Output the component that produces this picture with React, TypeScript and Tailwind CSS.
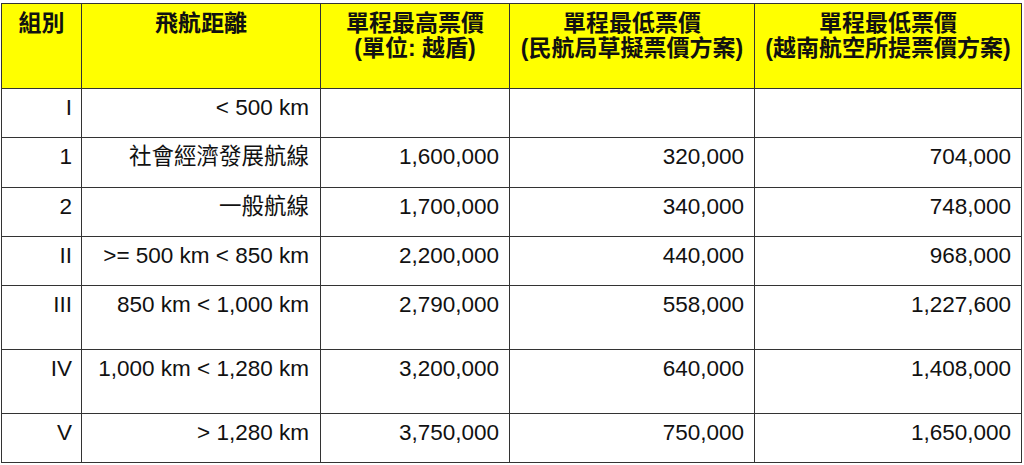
import React from "react";

const rows: { h: string; c: string[] }[] = [
  { h: "h-[49px]", c: ["I", "< 500 km", "", "", ""] },
  { h: "h-[50px]", c: ["1", "社會經濟發展航線", "1,600,000", "320,000", "704,000"] },
  { h: "h-[49px]", c: ["2", "一般航線", "1,700,000", "340,000", "748,000"] },
  { h: "h-[49px]", c: ["II", ">= 500 km < 850 km", "2,200,000", "440,000", "968,000"] },
  { h: "h-[64px]", c: ["III", "850 km < 1,000 km", "2,790,000", "558,000", "1,227,600"] },
  { h: "h-[64px]", c: ["IV", "1,000 km < 1,280 km", "3,200,000", "640,000", "1,408,000"] },
  { h: "h-[49px]", c: ["V", "> 1,280 km", "3,750,000", "750,000", "1,650,000"] },
];

const headers: string[][] = [
  ["組別"],
  ["飛航距離"],
  ["單程最高票價", "(單位: 越盾)"],
  ["單程最低票價", "(民航局草擬票價方案)"],
  ["單程最低票價", "(越南航空所提票價方案)"],
];

export default function App() {
  return (
    <div
      className="w-[1024px] h-[465px] bg-white overflow-hidden pt-[3px] pl-[1px] text-[#111]"
      style={{ fontFamily: '"Liberation Sans", "Noto Sans CJK TC", Arial, sans-serif' }}
    >
      <div className="grid grid-cols-[80px_239px_189px_245px_267px] border-l border-t border-[#333] w-fit">
        {headers.map((lines, i) => (
          <div
            key={"h" + i}
            className="h-[85px] bg-[#ffff00] border-r border-b border-[#333] pt-[7px] text-center font-bold text-[23px] leading-[25px]"
          >
            {lines.map((l, j) => (
              <div key={j} className="whitespace-nowrap">{l}</div>
            ))}
          </div>
        ))}
        {rows.map((r, ri) =>
          r.c.map((t, ci) => (
            <div
              key={ri + "-" + ci}
              className={`${r.h} border-r border-b border-[#333] pt-[6px] ${ci === 0 ? "pr-[9px]" : ci === 1 ? "pr-[11px]" : "pr-[10px]"} text-right text-[22.5px] leading-[25px] whitespace-nowrap`}
            >
              {t}
            </div>
          ))
        )}
      </div>
    </div>
  );
}
